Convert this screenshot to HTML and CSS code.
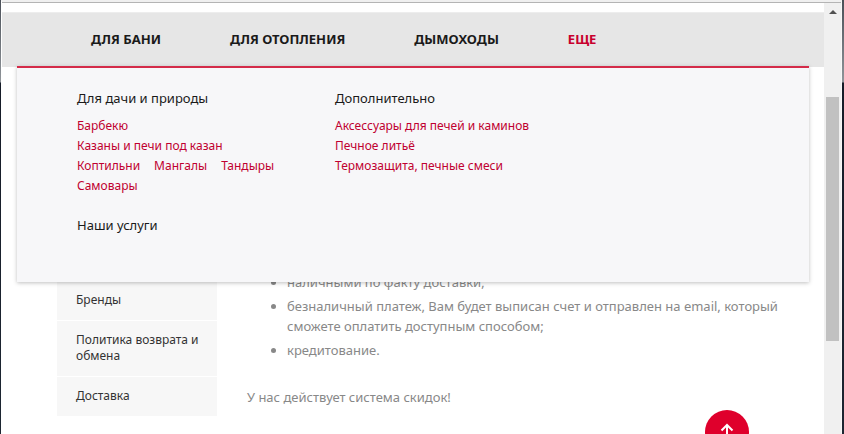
FILE: index.html
```html
<!DOCTYPE html>
<html lang="ru">
<head>
<meta charset="utf-8">
<title>Оплата</title>
<link rel="stylesheet" href="styles.css">
</head>
<body>
<div class="window">
  <div class="viewport">
    <header class="header">
      <nav class="nav">
        <a href="#">ДЛЯ БАНИ</a>
        <a href="#">ДЛЯ ОТОПЛЕНИЯ</a>
        <a href="#">ДЫМОХОДЫ</a>
        <a href="#" class="active">ЕЩЕ</a>
      </nav>
      <div class="dropdown">
        <section class="group">
          <h3>Для дачи и природы</h3>
          <ul>
            <li><a href="#">Барбекю</a></li>
            <li><a href="#">Казаны и печи под казан</a></li>
            <li><a href="#">Коптильни</a></li>
            <li><a href="#">Мангалы</a></li>
            <li><a href="#">Тандыры</a></li>
            <li><a href="#">Самовары</a></li>
          </ul>
        </section>
        <section class="group">
          <h3>Дополнительно</h3>
          <ul>
            <li><a href="#">Аксессуары для печей и каминов</a></li>
            <li><a href="#">Печное литьё</a></li>
            <li><a href="#">Термозащита, печные смеси</a></li>
          </ul>
        </section>
        <section class="group">
          <h3>Наши услуги</h3>
        </section>
      </div>
    </header>
    <div class="content">
      <aside class="sidebar">
        <a href="#">Бренды</a>
        <a href="#">Политика возврата и обмена</a>
        <a href="#">Доставка</a>
      </aside>
      <main class="article">
        <ul>
          <li>наличными по факту доставки;</li>
          <li>безналичный платеж, Вам будет выписан счет и отправлен на email, который сможете оплатить доступным способом;</li>
          <li>кредитование.</li>
        </ul>
        <p>У нас действует система скидок!</p>
      </main>
    </div>
    <button class="to-top" type="button" aria-label="Наверх">
      <svg viewBox="0 0 14 16" width="14" height="16"><path d="M7 15V2M1.500 7.500 7 2l5.500 5.500" fill="none" stroke="#fff" stroke-width="2"/></svg>
    </button>
  </div>
  <div class="scrollbar">
    <button type="button" aria-label="Прокрутить вверх">
      <svg viewBox="0 0 8 4" width="8" height="4"><path d="M0 4 4 0l4 4z" fill="#505050"/></svg>
    </button>
    <div class="thumb"></div>
  </div>
</div>
</body>
</html>
```
FILE: styles.css
```css
* {
  box-sizing: border-box;
}

body {
  margin: 0;
  font-family: "Noto Sans", sans-serif;
  background: linear-gradient(#4a5058 0, #90959a 82px, #161c28 83px, #1d2632 100%);
}

a {
  color: inherit;
  text-decoration: none;
}

h3, ul, p {
  margin: 0;
  padding: 0;
}

.window {
  display: flex;
  height: 100vh;
  margin: 0 2px 0 1px;
  border-top: 2px solid #f0f0f0;
  border-left: 1px solid #fff;
  border-right: 1px solid #f7f7f7;
  background: #fff;
}

.viewport {
  position: relative;
  flex: 1;
  min-width: 0;
  overflow: hidden;
  border-top: 1px solid #b4b4b4;
}

.header {
  position: relative;
  margin-top: 9px;
  border-top: 1px solid #ededed;
  background: #e6e6e6;
}

.nav {
  display: flex;
  gap: 69px;
  padding: 16px 89px 18px;
  font-size: 13px;
  font-weight: 700;
  line-height: 20px;
  color: #1a1a1a;
}

.nav .active {
  color: #c8002d;
}

.dropdown {
  position: absolute;
  z-index: 1;
  top: 53px;
  left: 15px;
  right: 15px;
  display: grid;
  grid-template-columns: 208px 228px;
  column-gap: 50px;
  row-gap: 19px;
  padding: 20px 60px 47px;
  border-top: 2px solid #d42b49;
  background: #f7f7f9;
  box-shadow: 0 1px 4px rgba(0, 0, 0, 0.25);
}

.group h3 {
  font-size: 13px;
  font-weight: 400;
  line-height: 20px;
  color: #1a1a1a;
}

.group ul {
  display: flex;
  flex-wrap: wrap;
  column-gap: 14px;
  padding-top: 8px;
  list-style: none;
  font-size: 12px;
  line-height: 20px;
  color: #c00030;
}

.group:first-child ul {
  padding-right: 4px;
}

.content {
  display: flex;
  gap: 30px;
  padding: 205px 40px 0 55px;
}

.sidebar {
  display: flex;
  flex-direction: column;
  flex: none;
  gap: 1px;
  width: 160px;
  padding-top: 9px;
  font-size: 12px;
  line-height: 16px;
  color: #333;
}

.sidebar a {
  padding: 11px 10px 12px 19px;
  background: #f7f7f7;
}

.article {
  flex: 1;
  min-width: 0;
  font-size: 13px;
  line-height: 20px;
  color: #888;
}

.article ul {
  padding-left: 40px;
}

.article li {
  margin-bottom: 4px;
}

.article p {
  padding-top: 23px;
}

.to-top {
  position: absolute;
  right: 75px;
  bottom: -20px;
  display: flex;
  justify-content: center;
  width: 44px;
  height: 44px;
  padding: 13px 0 0;
  border: 0;
  border-radius: 50%;
  background: #df002c;
}

.scrollbar {
  display: flex;
  flex-direction: column;
  flex: none;
  width: 17px;
  border-top: 1px solid #b4b4b4;
  background: #f0f0f0;
}

.scrollbar button {
  display: flex;
  justify-content: center;
  height: 17px;
  padding: 7px 0 0;
  border: 0;
  background: none;
}

.thumb {
  flex: 244;
  margin: 77px 2px 0;
  background: #c1c1c1;
}

.scrollbar::after {
  content: "";
  flex: 93;
}
```
